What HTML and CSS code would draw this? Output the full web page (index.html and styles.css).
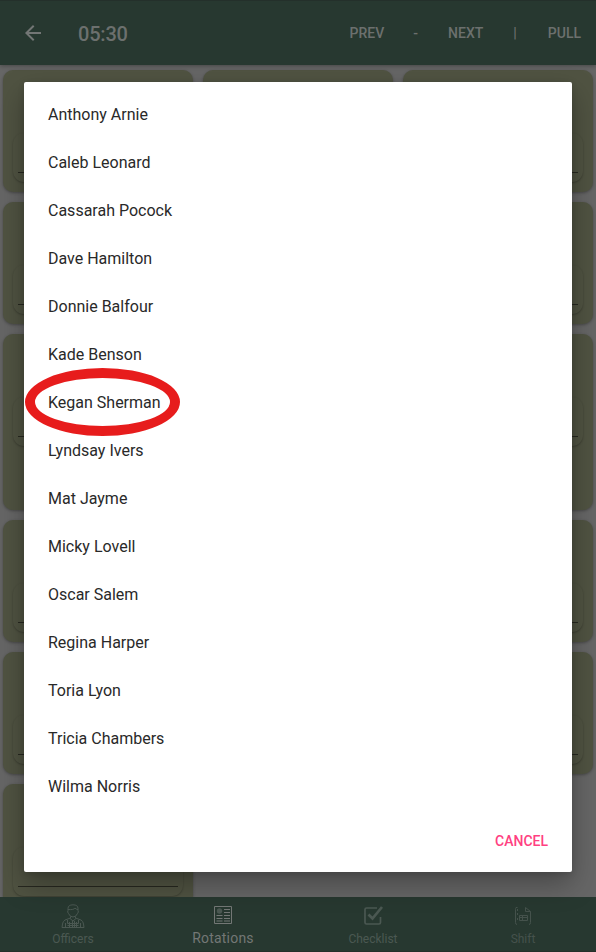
FILE: index.html
```html
<!DOCTYPE html>
<html lang="en">
<head>
<meta charset="utf-8">
<title>Rotations</title>
<link rel="stylesheet" href="styles.css">
</head>
<body>
<div class="app">
  <header class="topbar">
    <svg class="back" viewBox="0 0 24 24"><path d="M20 11H7.830l5.590-5.590L12 4l-8 8 8 8 1.410-1.410L7.830 13H20z"/></svg>
    <h1 class="title">05:30</h1>
    <nav class="actions"><span class="prev">PREV</span><span class="dash">-</span><span class="next">NEXT</span><span class="bar">|</span><span class="pull">PULL</span></nav>
  </header>
  <main class="grid">
    <div class="card"><div class="field"></div></div><div class="card"><div class="field"></div></div><div class="card"><div class="field"></div></div>
    <div class="card"><div class="field"></div></div><div class="card"><div class="field"></div></div><div class="card"><div class="field"></div></div>
    <div class="card tall"><div class="field"></div></div><div class="card tall"><div class="field"></div></div><div class="card tall"><div class="field"></div></div>
    <div class="card"><div class="field"></div></div><div class="card"><div class="field"></div></div><div class="card"><div class="field"></div></div>
    <div class="card"><div class="field"></div></div><div class="card"><div class="field"></div></div><div class="card"><div class="field"></div></div>
    <div class="card"><div class="field"></div></div>
  </main>
  <footer class="tabs">
    <div class="tab">
      <svg class="icon" viewBox="0 0 24 24"><path d="M7 6.500V4.500Q7 .8 12 .8t5 3.700v2M7 5.500q6 .5 7-1.500 1 1.500 3 1.500M7 6.500q-1 1.500 .5 3Q9 13 12 13t4.500-3.500q1.500-1.500 .5-3M9.500 12.500v1.500L4 16Q2 17 1.500 20L1 23.500h22L22.500 20q-.5-3-2.500-4l-5.500-2v-1.500M9 14.500l3 2.500 3-2.500M11.500 17v6.500M4.500 19v4.500M19.500 19v4.500M6.500 16v3.500h11V16M6.500 21.500h11M8.500 18v5M15.500 18v5M13.500 17v6"/></svg>
      <span>Officers</span>
    </div>
    <div class="tab active">
      <svg class="icon" viewBox="0 0 24 24"><path d="M3.500 3.500h17v17h-17zM13 6.500h6M13 9.500h6M13 12.500h6M13 15.500h6M13 18h6M5.500 12.500h6M5.500 15.500h6M5.500 18h6"/><circle class="solid" cx="8.500" cy="8" r="2.700"/></svg>
      <span>Rotations</span>
    </div>
    <div class="tab">
      <svg class="icon check" viewBox="0 0 24 24"><path d="M16 4H5.500Q4 4 4 5.500v13Q4 20 5.500 20h12.500q1.500 0 1.500-1.500V13"/><path class="tick" d="M7.500 10.500l4 4L21 3"/></svg>
      <span>Checklist</span>
    </div>
    <div class="tab faint">
      <svg class="icon" viewBox="0 0 24 24"><path d="M6.500 3.500H5q-.5 1-.5 2v13q0 2 1.500 2M6.500 5v2M6.500 9v2M6.500 14v2M14.500 3.500v4h5v11q0 2-1.500 2M14.500 3.500l5 4M8.500 11.500h8v5h-8zM8.500 13.500h8M11.500 11.500v5"/></svg>
      <span>Shift</span>
    </div>
  </footer>
</div>
<div class="dialog">
  <ul class="names">
    <li>Anthony Arnie</li><li>Caleb Leonard</li><li>Cassarah Pocock</li><li>Dave Hamilton</li><li>Donnie Balfour</li><li>Kade Benson</li><li class="marked">Kegan Sherman</li><li>Lyndsay Ivers</li><li>Mat Jayme</li><li>Micky Lovell</li><li>Oscar Salem</li><li>Regina Harper</li><li>Toria Lyon</li><li>Tricia Chambers</li><li>Wilma Norris</li>
  </ul>
  <div class="buttons"><span>CANCEL</span></div>
</div>
</body>
</html>
```
FILE: styles.css
```css
*, *::before, *::after { box-sizing: border-box; }
body { margin: 0; width: 596px; height: 952px; overflow: hidden; position: relative; font-family: Roboto, "Liberation Sans", sans-serif; background: #666; }
.app { height: 952px; display: flex; flex-direction: column; }
.topbar { height: 65px; flex: none; display: flex; align-items: center; padding: 0 15px 0 21px; background: #273830; border-top: 1px solid #24302b; color: #6c706e; box-shadow: 0 1px 4px rgba(0,0,0,.3); position: relative; }
.back { width: 24px; height: 24px; fill: #737675; }
.title { margin: 2px 0 0 33px; font-size: 20px; font-weight: 500; line-height: 24px; letter-spacing: -.2px; }
.actions { margin-left: auto; display: flex; font-size: 14px; font-weight: 500; line-height: 20px; }
.dash { margin-left: 29px; }
.next { margin-left: 30px; }
.bar { margin-left: 30px; }
.pull { margin-left: 31px; }
.grid { flex: 1; min-height: 0; overflow: hidden; padding: 5px 3px 0; display: grid; grid-template-columns: repeat(3, 190px); gap: 10px; align-content: start; }
.card { height: 122px; border-radius: 10px; background: #505342; padding: 63px 10px 0; box-shadow: 0 1px 3px rgba(0,0,0,.3); }
.tall { height: 176px; }
.field { height: 49px; border-radius: 11px; box-shadow: 0 1px 2px rgba(0,0,0,.25); padding: 39px 5px 0; }
.field::after { content: ""; display: block; height: 1px; background: #272820; }
.tabs { height: 55px; flex: none; display: grid; grid-template-columns: repeat(4, 150px); justify-content: center; background: #273830; border-bottom: 1px solid #24302b; }
.tab { display: flex; flex-direction: column; align-items: center; padding-top: 7px; color: #4b5852; font-size: 12px; line-height: 18px; }
.tab span { margin-top: 2px; }
.active { color: #737775; font-size: 14px; letter-spacing: .2px; }
.faint { color: #45524c; }
.icon { width: 24px; height: 24px; fill: none; stroke: currentColor; stroke-width: 1; }
.active .icon { margin-top: -1px; }
.solid { fill: #4b5852; stroke: none; }
.check { stroke-width: 1.7; }
.tick { stroke-width: 2.7; }
.dialog { position: absolute; left: 24px; top: 82px; width: 548px; height: 790px; background: #fff; border-radius: 2px; box-shadow: 0 12px 28px rgba(0,0,0,.3), 0 2px 6px rgba(0,0,0,.12); padding-top: 9px; display: flex; flex-direction: column; }
.names { list-style: none; margin: 0; padding: 0 24px; font-size: 16px; line-height: 48px; color: #292929; }
.names li { height: 48px; position: relative; }
.marked::after { content: ""; position: absolute; left: -23px; top: -11px; width: 155px; height: 68px; border: 10px solid #e71c1c; border-radius: 50%; }
.buttons { flex: 1; display: flex; justify-content: flex-end; padding: 20px 24px 0; color: #ff4081; font-size: 14px; font-weight: 500; line-height: 20px; }
```
